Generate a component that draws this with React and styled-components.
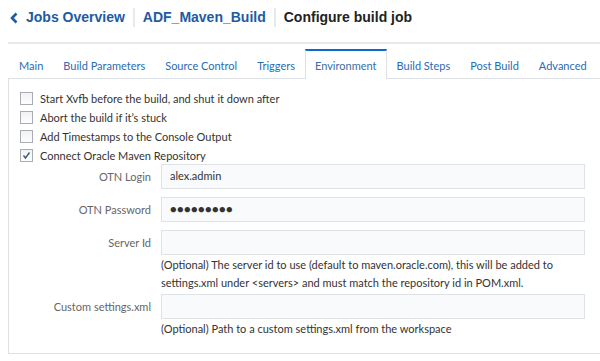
import React from 'react'
import styled, { createGlobalStyle } from 'styled-components'

const GlobalStyle = createGlobalStyle`
  body {
    margin: 0;
    background: #fff;
    font-family: Lato, "Liberation Sans", sans-serif;
    color: #333;
  }
`

const Page = styled.div`
  width: 600px;
  height: 361px;
  overflow: hidden;
  padding-left: 8px;
  box-sizing: border-box;
`

const Header = styled.div`
  display: flex;
  align-items: center;
  height: 35px;
  padding-bottom: 7px;
  border-bottom: 2px solid #e6e9ed;
  font-family: "Liberation Sans", Arial, sans-serif;
  font-weight: bold;
  font-size: 14px;
`

const Crumb = styled.span`
  display: flex;
  align-items: center;
  gap: 8px;
  padding: 0 8px 0 ${(p) => (p.first ? '2px' : '8px')};
  color: ${(p) => (p.current ? '#222' : '#1d5ba3')};
  border-left: ${(p) => (p.first ? 'none' : '2px solid #e6e9ed')};
  line-height: 19px;
`

const Tabs = styled.div`
  display: flex;
  margin-top: 5px;
  height: 29px;
  border-bottom: 1px solid #dde1e6;
`

const Tab = styled.div`
  padding: 3px 9px 0 ${(p) => (p.first ? '10px' : '9px')};
  font-size: 11px;
  line-height: 24px;
  white-space: nowrap;
  color: ${(p) => (p.active ? '#3a6ea8' : '#2a6bb3')};
  box-sizing: border-box;
  border-top: 2px solid ${(p) => (p.active ? '#0b6ad0' : 'transparent')};
  border-left: 1px solid ${(p) => (p.active ? '#dde1e6' : 'transparent')};
  border-right: 1px solid ${(p) => (p.active ? '#dde1e6' : 'transparent')};
  background: #fff;
  margin-bottom: ${(p) => (p.active ? '-1px' : '0')};
  height: ${(p) => (p.active ? '30px' : '29px')};
`

const Panel = styled.div`
  border-left: 1px solid #dde1e6;
  border-bottom: 1px solid #dde1e6;
  height: 275px;
  padding: 10px 0 0 11px;
  box-sizing: border-box;
  font-size: 11px;
`

const CheckRow = styled.label`
  display: flex;
  align-items: center;
  gap: 7px;
  height: 19px;
`

const Box = styled.span`
  width: 11px;
  height: 11px;
  border: 1px solid #a9adb3;
  background: linear-gradient(#f1f2f4, #fdfdfd);
  display: flex;
  align-items: center;
  justify-content: center;
`

const Form = styled.div`
  display: flex;
  flex-direction: column;
  margin-top: -1px;
`

const Field = styled.div`
  display: grid;
  grid-template-columns: 131px 424px;
  column-gap: 10px;
  align-items: start;
  padding-bottom: ${(p) => (p.tight ? '2px' : '8px')};
`

const Label = styled.div`
  text-align: right;
  color: #666;
  line-height: 25px;
`

const Input = styled.div`
  height: 25px;
  box-sizing: border-box;
  border: 1px solid #dfe3e8;
  background: #f9fafb;
  padding: 0 8px;
  line-height: 22px;
  color: #333;
  font-size: 11px;
  letter-spacing: ${(p) => (p.secret ? '0.4px' : '0')};
`

const Help = styled.div`
  grid-column: 2;
  line-height: 18px;
  padding-top: 1px;
  color: #333;
`

const Check = () => (
  <svg width="9" height="9" viewBox="0 0 9 9">
    <path d="M1.5 4.5 L3.5 7 L7.5 1.5" fill="none" stroke="#3b5a7a" strokeWidth="1.4" />
  </svg>
)

const options = [
  ['Start Xvfb before the build, and shut it down after', false],
  ['Abort the build if it\u2019s stuck', false],
  ['Add Timestamps to the Console Output', false],
  ['Connect Oracle Maven Repository', true],
]

const tabs = ['Main', 'Build Parameters', 'Source Control', 'Triggers', 'Environment', 'Build Steps', 'Post Build', 'Advanced']

export default function App() {
  return (
    <Page>
      <GlobalStyle />
      <Header>
        <Crumb first>
          <svg width="8" height="12" viewBox="0 0 8 12">
            <path d="M6.5 1.5 L2 6 L6.5 10.5" fill="none" stroke="#1d5ba3" strokeWidth="2.6" />
          </svg>
          Jobs Overview
        </Crumb>
        <Crumb>ADF_Maven_Build</Crumb>
        <Crumb current>Configure build job</Crumb>
      </Header>
      <Tabs>
        {tabs.map((t, i) => (
          <Tab key={t} first={i === 0} active={t === 'Environment'}>{t}</Tab>
        ))}
      </Tabs>
      <Panel>
        {options.map(([text, on]) => (
          <CheckRow key={text}>
            <Box>{on && <Check />}</Box>
            {text}
          </CheckRow>
        ))}
        <Form>
          <Field>
            <Label>OTN Login</Label>
            <Input>alex.admin</Input>
          </Field>
          <Field>
            <Label>OTN Password</Label>
            <Input secret>{'\u25CF'.repeat(9)}</Input>
          </Field>
          <Field tight>
            <Label>Server Id</Label>
            <Input />
            <Help>
              (Optional) The server id to use (default to maven.oracle.com), this will be added to
              settings.xml under &lt;servers&gt; and must match the repository id in POM.xml.
            </Help>
          </Field>
          <Field>
            <Label>Custom settings.xml</Label>
            <Input />
            <Help>(Optional) Path to a custom settings.xml from the workspace</Help>
          </Field>
        </Form>
      </Panel>
    </Page>
  )
}
